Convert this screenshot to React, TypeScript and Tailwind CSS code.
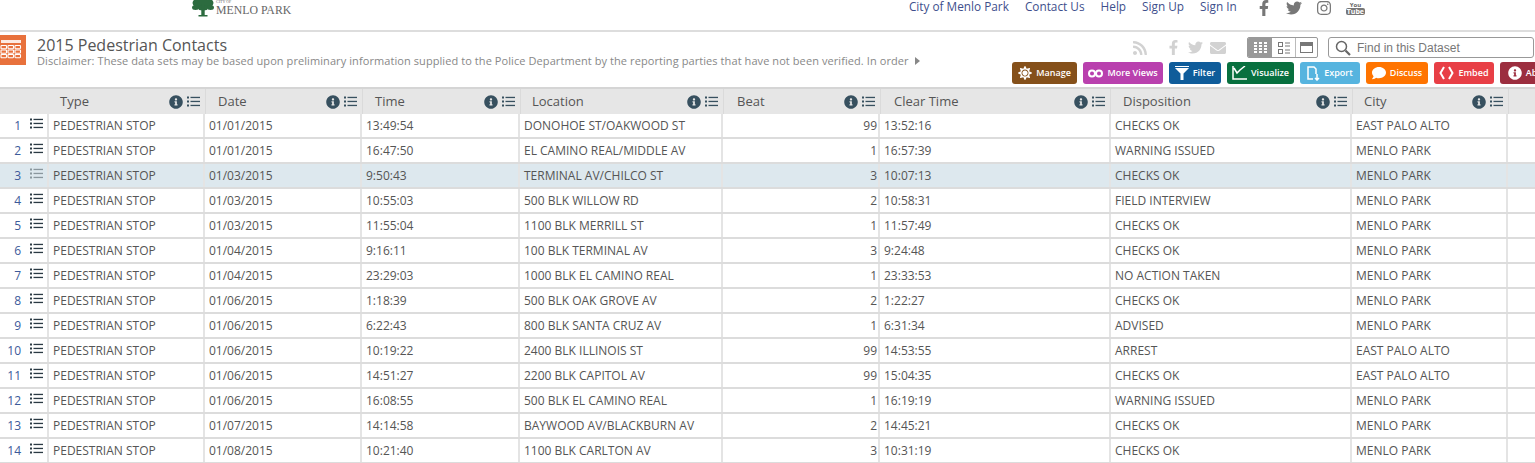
import { FaInfoCircle, FaFacebookF, FaTwitter, FaInstagram, FaRss, FaEnvelope, FaSun, FaComment } from 'react-icons/fa';

const COLUMNS = [
  { label: 'Type', width: 'w-[158px]', pad: 'pl-[12px]' },
  { label: 'Date', width: 'w-[157px]', pad: 'pl-[12px]' },
  { label: 'Time', width: 'w-[158px]', pad: 'pl-[12px]' },
  { label: 'Location', width: 'w-[203px]', pad: 'pl-[11px]' },
  { label: 'Beat', width: 'w-[157px]', pad: 'pl-[13px]' },
  { label: 'Clear Time', width: 'w-[230px]', pad: 'pl-[13px]' },
  { label: 'Disposition', width: 'w-[242px]', pad: 'pl-[12px]' },
  { label: 'City', width: 'w-[156px]', pad: 'pl-[11px]' },
];

const ROWS = [
  ['01/01/2015', '13:49:54', 'DONOHOE ST/OAKWOOD ST', '99', '13:52:16', 'CHECKS OK', 'EAST PALO ALTO'],
  ['01/01/2015', '16:47:50', 'EL CAMINO REAL/MIDDLE AV', '1', '16:57:39', 'WARNING ISSUED', 'MENLO PARK'],
  ['01/03/2015', '9:50:43', 'TERMINAL AV/CHILCO ST', '3', '10:07:13', 'CHECKS OK', 'MENLO PARK'],
  ['01/03/2015', '10:55:03', '500 BLK WILLOW RD', '2', '10:58:31', 'FIELD INTERVIEW', 'MENLO PARK'],
  ['01/03/2015', '11:55:04', '1100 BLK MERRILL ST', '1', '11:57:49', 'CHECKS OK', 'MENLO PARK'],
  ['01/04/2015', '9:16:11', '100 BLK TERMINAL AV', '3', '9:24:48', 'CHECKS OK', 'MENLO PARK'],
  ['01/04/2015', '23:29:03', '1000 BLK EL CAMINO REAL', '1', '23:33:53', 'NO ACTION TAKEN', 'MENLO PARK'],
  ['01/06/2015', '1:18:39', '500 BLK OAK GROVE AV', '2', '1:22:27', 'CHECKS OK', 'MENLO PARK'],
  ['01/06/2015', '6:22:43', '800 BLK SANTA CRUZ AV', '1', '6:31:34', 'ADVISED', 'MENLO PARK'],
  ['01/06/2015', '10:19:22', '2400 BLK ILLINOIS ST', '99', '14:53:55', 'ARREST', 'EAST PALO ALTO'],
  ['01/06/2015', '14:51:27', '2200 BLK CAPITOL AV', '99', '15:04:35', 'CHECKS OK', 'EAST PALO ALTO'],
  ['01/06/2015', '16:08:55', '500 BLK EL CAMINO REAL', '1', '16:19:19', 'WARNING ISSUED', 'MENLO PARK'],
  ['01/07/2015', '14:14:58', 'BAYWOOD AV/BLACKBURN AV', '2', '14:45:21', 'CHECKS OK', 'MENLO PARK'],
  ['01/08/2015', '10:21:40', '1100 BLK CARLTON AV', '3', '10:31:19', 'CHECKS OK', 'MENLO PARK'],
];

function Tree() {
  return (
    <svg width="22" height="17" viewBox="0 0 22 17" fill="#2c6b3f">
      <ellipse cx="11" cy="3" rx="10.5" ry="6" />
      <ellipse cx="3.5" cy="7.5" rx="3.5" ry="2.5" />
      <ellipse cx="18.5" cy="7.5" rx="3.5" ry="2.5" />
      <ellipse cx="11" cy="8" rx="5" ry="2.5" />
      <rect x="9.3" y="4" width="3.4" height="12" />
      <rect x="6.5" y="15" width="9" height="1.5" />
    </svg>
  );
}

function TableIcon() {
  return (
    <svg width="26" height="30" viewBox="0 0 26 30">
      <rect width="26" height="30" fill="#e8713c" />
      <rect x="1" y="5" width="20" height="3" fill="#fff" opacity="0.85" />
      {[10.5, 15, 19.5].map((y) =>
        [1, 8, 15].map((x) => (
          <rect key={`${x}-${y}`} x={x} y={y} width="5.5" height="3.2" rx="0.6" fill="none" stroke="#fff" strokeWidth="1.1" />
        )),
      )}
    </svg>
  );
}

function YoutubeIcon() {
  return (
    <div className="flex flex-col items-center text-[#666] leading-none">
      <span className="text-[6px] font-bold">You</span>
      <span className="rounded-[2px] bg-[#777] px-[1px] text-[7px] font-bold text-white">Tube</span>
    </div>
  );
}

function ListIcon({ className }: { className?: string }) {
  return (
    <svg width="13" height="11" viewBox="0 0 13 11" fill="currentColor" className={className}>
      <rect x="0" y="0.5" width="2" height="2" />
      <rect x="0" y="4.5" width="2" height="2" />
      <rect x="0" y="8.5" width="2" height="2" />
      <rect x="3.5" y="0.8" width="9.5" height="1.3" />
      <rect x="3.5" y="4.8" width="9.5" height="1.3" />
      <rect x="3.5" y="8.8" width="9.5" height="1.3" />
    </svg>
  );
}

function ActionButton({ label, icon, bg, width }: { label: string; icon: React.ReactNode; bg: string; width: string }) {
  return (
    <div className={`flex h-[22px] shrink-0 items-center justify-center gap-[4px] rounded-[3px] text-[9px] font-semibold text-white ${bg} ${width}`}>
      {icon}
      <span className="whitespace-nowrap">{label}</span>
    </div>
  );
}

function Cell({ width, right, children }: { width: string; right?: boolean; children: React.ReactNode }) {
  return (
    <div className={`flex shrink-0 items-center border-r-2 border-[#e4e4e4] pl-[4px] pt-[1px] ${right ? 'justify-end pr-[1px]' : ''} ${width}`}>
      {children}
    </div>
  );
}

export default function App() {
  return (
    <div className="h-[463px] w-[1535px] overflow-hidden bg-white font-['Open_Sans',sans-serif] text-[#555]">
      {/* Top nav */}
      <header className="flex h-[32px] items-start border-b-2 border-[#ddd]">
        <div className="ml-[192px] flex items-start gap-[2px]">
          <Tree />
          <div className="flex flex-col font-['Liberation_Serif',serif] leading-none text-[#666]">
            <span className="h-[4px] text-[4px] leading-[4px]">CITY OF</span>
            <span className="text-[11.8px] font-medium leading-[12px]">MENLO PARK</span>
          </div>
        </div>
        <nav className="ml-auto mr-[170px] flex items-start gap-[16px] text-[11.8px] leading-[13px] text-[#3e4f8c]">
          <span>City of Menlo Park</span>
          <span>Contact Us</span>
          <span>Help</span>
          <span>Sign Up</span>
          <span>Sign In</span>
          <div className="ml-[3px] flex items-center gap-[14px] text-[16px] text-[#777]">
            <FaFacebookF />
            <FaTwitter />
            <FaInstagram />
            <YoutubeIcon />
          </div>
        </nav>
      </header>

      {/* Title bar */}
      <section className="flex h-[57px] border-b-2 border-[#d5d5d5]">
        <div className="flex w-[1012px] shrink-0 pt-[3px]">
          <TableIcon />
          <div className="ml-[11px]">
            <h1 className="text-[16px] leading-[20px] text-[#555]">2015 Pedestrian Contacts</h1>
            <p className="flex items-center gap-[6px] whitespace-nowrap text-[11px] leading-[11px] tracking-[0.08px] text-[#888]">
              Disclaimer: These data sets may be based upon preliminary information supplied to the Police Department by the reporting parties that have not been verified. In order
              <span className="h-0 w-0 border-y-[4px] border-l-[5px] border-y-transparent border-l-[#888]" />
            </p>
          </div>
        </div>
        <div className="flex flex-col">
          <div className="mt-[5px] flex h-[21px] items-center">
            <div className="flex w-[235px] justify-end pr-[21px]">
              <div className="flex items-center text-[#d2d2d2]">
                <FaRss size={16} />
                <FaFacebookF size={15} className="ml-[18px]" />
                <FaTwitter size={15} className="ml-[7px]" />
                <FaEnvelope size={16} className="ml-[7px]" />
              </div>
            </div>
            <div className="flex h-[21px] w-[71px] overflow-hidden rounded-[2px] border border-[#999]">
              <div className="flex w-[24px] items-center justify-center bg-[#999]">
                <svg width="13" height="11" viewBox="0 0 13 11" fill="#fff">
                  {[0, 3, 6, 9].map((y) => [0, 5, 10].map((x) => <rect key={`${x}-${y}`} x={x} y={y} width="3" height="2" />))}
                </svg>
              </div>
              <div className="flex w-[24px] items-center justify-center border-r border-[#bbb]">
                <svg width="12" height="12" viewBox="0 0 12 12" fill="none" stroke="#777">
                  <rect x="0.5" y="0.5" width="4" height="4" />
                  <rect x="0.5" y="7.5" width="4" height="4" />
                  <path d="M7 1h5M7 4h5M7 8h5M7 11h5" />
                </svg>
              </div>
              <div className="flex flex-1 items-center justify-center">
                <div className="h-[11px] w-[13px] border border-t-[4px] border-[#777]" />
              </div>
            </div>
            <div className="ml-[10px] flex h-[21px] w-[206px] shrink-0 items-center gap-[6px] rounded-[3px] border border-[#999] pl-[6px] font-['Liberation_Sans',sans-serif] text-[12px] text-[#777]">
              <svg width="16" height="16" viewBox="0 0 16 16" fill="none" stroke="#666">
                <circle cx="6.5" cy="6.5" r="5" strokeWidth="1.5" />
                <path d="M10.5 10.5L15 15" strokeWidth="2.2" />
              </svg>
              <span>Find in this Dataset</span>
            </div>
          </div>
          <div className="mt-[4px] flex gap-[6px]">
            <ActionButton label="Manage" bg="bg-[#85501a]" width="w-[65px]" icon={<FaSun size={14} />} />
            <ActionButton label="More Views" bg="bg-[#b940ae]" width="w-[80px]" icon={
              <svg width="15" height="9" viewBox="0 0 15 9" fill="none" stroke="#fff" strokeWidth="2"><circle cx="4" cy="4.5" r="3" /><circle cx="11" cy="4.5" r="3" /></svg>
            } />
            <ActionButton label="Filter" bg="bg-[#0f5c9a]" width="w-[52px]" icon={
              <svg width="14" height="14" viewBox="0 0 14 14" fill="#fff"><path d="M0 0h14v1H0zM0 2h14L8.5 7.5V14h-3V7.5z" /></svg>
            } />
            <ActionButton label="Visualize" bg="bg-[#08703f]" width="w-[67px]" icon={
              <svg width="15" height="14" viewBox="0 0 15 14" fill="none" stroke="#fff" strokeWidth="1.5"><path d="M1 0v13h14M2 2l3 5 3-3 5-4" /></svg>
            } />
            <ActionButton label="Export" bg="bg-[#56b4df]" width="w-[60px]" icon={
              <svg width="13" height="15" viewBox="0 0 13 15" fill="none" stroke="#fff" strokeWidth="1.5"><path d="M6 13H1V1h6l2 2v5M10 8v6M8 12l2 2 2-2" /></svg>
            } />
            <ActionButton label="Discuss" bg="bg-[#ff7400]" width="w-[62px]" icon={<FaComment size={14} />} />
            <ActionButton label="Embed" bg="bg-[#e83f46]" width="w-[60px]" icon={
              <svg width="15" height="14" viewBox="0 0 15 14" fill="none" stroke="#fff" strokeWidth="2"><path d="M5 1L1.5 7 5 13M10 1l3.5 6L10 13" /></svg>
            } />
            <ActionButton label="About" bg="bg-[#9c2e3f]" width="w-[60px]" icon={<FaInfoCircle size={14} />} />
          </div>
        </div>
      </section>

      {/* Table head */}
      <div className="flex h-[25px] bg-[#e6e6e6] text-[13px] text-[#555]">
        <div className="w-[48px] shrink-0" />
        {COLUMNS.map((c) => (
          <div key={c.label} className={`flex shrink-0 items-center justify-between border-r border-[#dadada] pr-[5px] ${c.pad} ${c.width}`}>
            <span>{c.label}</span>
            <div className="flex items-center gap-[4px] text-[#37505f]">
              <FaInfoCircle size={14} />
              <ListIcon />
            </div>
          </div>
        ))}
      </div>

      {/* Table rows */}
      {ROWS.map((r, i) => (
        <div key={i} className={`flex h-[25px] border-b-2 border-[#dcdcdc] text-[12px] ${i === 2 ? 'bg-[#dde8ee]' : 'bg-white'}`}>
          <div className="flex w-[49px] shrink-0 items-center border-r-2 border-[#e4e4e4] pt-[1px]">
            <span className="w-[21px] text-right text-[#3c5a9a]">{i + 1}</span>
            <ListIcon className={`ml-[9px] -mt-[5px] ${i === 2 ? 'text-[#8a979e]' : 'text-[#2b3a44]'}`} />
          </div>
          <Cell width="w-[156px]">PEDESTRIAN STOP</Cell>
          <Cell width="w-[157px]">{r[0]}</Cell>
          <Cell width="w-[158px]">{r[1]}</Cell>
          <Cell width="w-[203px]">{r[2]}</Cell>
          <Cell width="w-[157px]" right>{r[3]}</Cell>
          <Cell width="w-[231px]">{r[4]}</Cell>
          <Cell width="w-[241px]">{r[5]}</Cell>
          <Cell width="w-[156px]">{r[6]}</Cell>
        </div>
      ))}
    </div>
  );
}
